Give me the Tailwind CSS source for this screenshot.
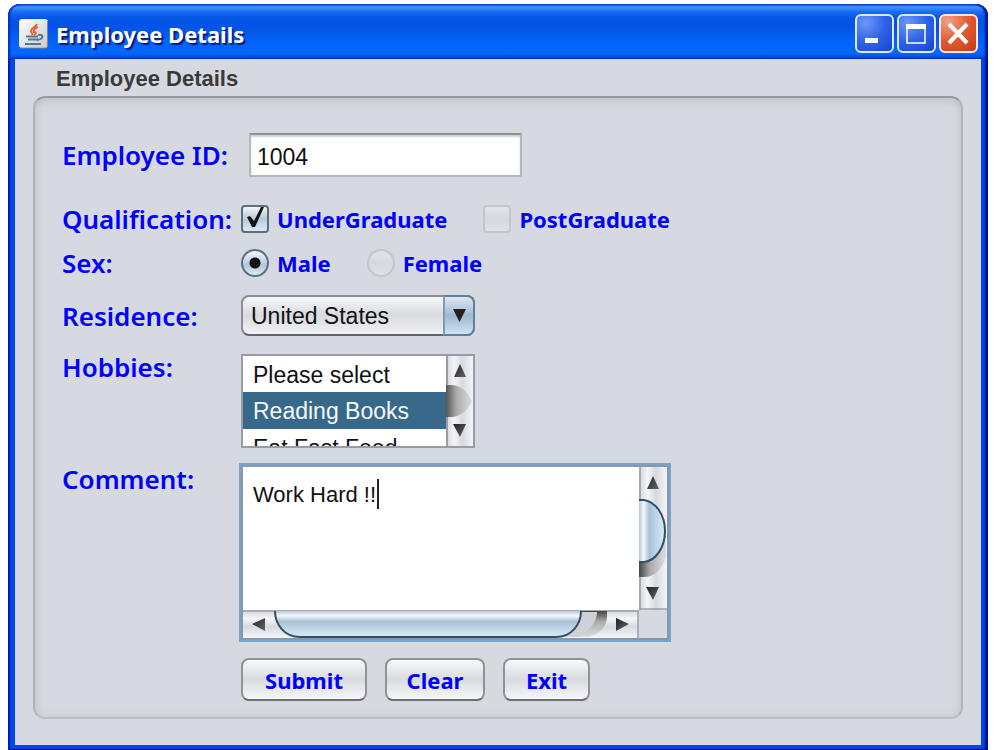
<!DOCTYPE html>
<html lang="en">
<head>
    <meta charset="UTF-8">
    <meta name="viewport" content="width=device-width, initial-scale=1.0">
    <script src="https://cdn.jsdelivr.net/npm/@tailwindcss/browser@4"></script>
    <title>Employee Details</title>
</head>
<body class="bg-white">
    <div class="min-h-screen flex flex-col pt-1 pl-2 pr-3 font-['Liberation_Sans',sans-serif]">
        <div class="grow flex flex-col rounded-t-xl bg-[#0348e6] shadow-[inset_2px_0_1px_#0018c0,inset_-3px_0_2px_#000c96,inset_0_-2px_1px_#000c96]">
            <!-- title bar -->
            <header
                class="h-[55px] flex items-center pl-[11px] pr-2.5 pt-1 rounded-t-xl
                bg-[linear-gradient(180deg,#0a4fd8_0%,#3a94ff_6%,#1c6cf4_14%,#0454e4_26%,#0355e6_45%,#0364fb_70%,#0468ff_90%,#0040d0_100%)]
                shadow-[inset_2px_0_2px_#0030c8,inset_-3px_0_2px_#0018a8]"
            >
                <svg class="w-[29px] h-[30px] shrink-0" viewBox="0 0 29 30">
                    <defs>
                        <linearGradient id="java" x1="0" y1="0" x2="1" y2="1">
                            <stop offset="0" stop-color="#fdfdfd"/>
                            <stop offset="1" stop-color="#c9cbce"/>
                        </linearGradient>
                    </defs>
                    <rect x=".5" y=".5" width="28" height="28" rx="2" fill="url(#java)" stroke="#e8ecf4"/>
                    <path d="M1 29h27M28.500 2v26" stroke="#7e8590" fill="none"/>
                    <path d="M18 5c-1 3-6 4-6 7 0 2 2 2 1 4M19 8c-3 1-5 3-4 5 2 0 3 1 0 3" stroke="#ee6038" stroke-width="2" fill="none"/>
                    <path d="M7 17.500h12M9 20.500h10M6 25h16" stroke="#547795" stroke-width="2" fill="none"/>
                    <path d="M19 16c6-1 6 4-1 5" stroke="#547795" stroke-width="2" fill="none"/>
                </svg>
                <h1 class="grow pl-2 font-['Noto_Sans',sans-serif] text-[22px] leading-8 font-bold text-white [text-shadow:2px_2px_1px_#0a1c80]">Employee Details</h1>
                <div class="flex gap-[3px]">
                    <button
                        type="button" aria-label="Minimize"
                        class="size-[39px] rounded-md border-2 border-[#dfe8ff]
                        bg-[radial-gradient(circle_at_25%_20%,#6d98f6,#2e62ea_50%,#1845cc)]"
                    >
                        <svg viewBox="0 0 35 35"><path d="M8 22h13v5H8z" fill="#fff"/></svg>
                    </button>
                    <button
                        type="button" aria-label="Maximize"
                        class="size-[39px] rounded-md border-2 border-[#dfe8ff]
                        bg-[radial-gradient(circle_at_25%_20%,#6d98f6,#2e62ea_50%,#1845cc)]"
                    >
                        <svg viewBox="0 0 35 35">
                            <path d="M8 10h18v17H8z" fill="none" stroke="#fff" stroke-width="1.500"/>
                            <path d="M7 8h20v5H7z" fill="#fff"/>
                        </svg>
                    </button>
                    <button
                        type="button" aria-label="Close"
                        class="size-[39px] rounded-md border-2 border-[#ffe8e0]
                        bg-[radial-gradient(circle_at_20%_15%,#f0a084,#e05a32_50%,#c83c10)]"
                    >
                        <svg viewBox="0 0 35 35"><path d="M8 8l18 19M26 8L8 27" stroke="#fff" stroke-width="4"/></svg>
                    </button>
                </div>
            </header>

            <main class="grow flex flex-col ml-[7px] mr-[7px] mb-1.5 px-[18px] pb-[26px] bg-[#d6d9df]">
                <h2 id="group_title" class="pl-[23px] pt-1 h-[37px] text-[22px] leading-8 font-bold text-[#3a3a3a]">Employee Details</h2>
                <form
                    name="employee" aria-labelledby="group_title"
                    class="grow rounded-xl border-2 border-t-[#989aa0] border-x-[#b2b4b8] border-b-[#bcbec2]
                    shadow-[inset_0_2px_8px_#a8aaae99] pl-[27px] pt-[35px] pb-4 pr-4 text-[23px] text-[#111111]"
                >
                    <div class="flex items-center h-11">
                        <label for="employee_id" class="w-[187px] font-['Noto_Sans',sans-serif] text-[26px] leading-8 font-semibold text-[#0000ff]">Employee ID:</label>
                        <input
                            type="text" id="employee_id" name="employee_id" value="1004"
                            class="w-[273px] h-11 px-1.5 pt-1 bg-white border-2 border-[#b4b7be] border-t-[#8d9097] shadow-[inset_0_2px_2px_#d0d2d6]">
                    </div>

                    <div class="flex items-center h-11 mt-5" role="group" aria-labelledby="qualification">
                        <span id="qualification" class="w-[179px] font-['Noto_Sans',sans-serif] text-[26px] leading-8 font-semibold text-[#0000ff]">Qualification:</span>
                        <div class="flex items-center gap-9 font-['Noto_Sans',sans-serif] text-[22px] leading-8 font-bold text-[#0000ff]">
                            <label class="flex items-center gap-2">
                                <span class="relative size-7">
                                    <input
                                        type="checkbox" name="undergraduate" checked
                                        class="block appearance-none size-7 rounded border-2 border-[#5b6f82] bg-linear-to-b from-[#f2f6fa] via-[#b6c9da] to-[#dcebf6]">
                                    <svg class="absolute inset-0 pointer-events-none" viewBox="0 0 28 28"><path d="M6 12l3-1 4 5 7-14 3 0-9 20h-3z" fill="#111"/></svg>
                                </span>
                                UnderGraduate
                            </label>
                            <label class="flex items-center gap-2">
                                <input
                                    type="checkbox" name="postgraduate"
                                    class="appearance-none size-7 rounded border-2 border-[#c3c6ca] bg-linear-to-b from-[#e2e4e8] via-[#d5d8dd] to-[#dee1e5]">
                                PostGraduate
                            </label>
                        </div>
                    </div>

                    <div class="flex items-center h-11" role="radiogroup" aria-labelledby="sex">
                        <span id="sex" class="w-[179px] font-['Noto_Sans',sans-serif] text-[26px] leading-8 font-semibold text-[#0000ff]">Sex:</span>
                        <div class="flex items-center gap-9 font-['Noto_Sans',sans-serif] text-[22px] leading-8 font-bold text-[#0000ff]">
                            <label class="flex items-center gap-2">
                                <input
                                    type="radio" name="sex" value="male" checked
                                    class="appearance-none size-7 rounded-full border-2 border-[#5b6f82]
                                    bg-[radial-gradient(circle,#111111_5px,transparent_6px),linear-gradient(180deg,#f2f6fa,#b3c7d9_60%,#dcebf6)]">
                                Male
                            </label>
                            <label class="flex items-center gap-2">
                                <input
                                    type="radio" name="sex" value="female"
                                    class="appearance-none size-7 rounded-full border-2 border-[#c3c6ca] bg-linear-to-b from-[#e2e4e8] via-[#d5d8dd] to-[#dee1e5]">
                                Female
                            </label>
                        </div>
                    </div>

                    <div class="flex items-center h-[41px] mt-2.5">
                        <label for="residence" class="w-[179px] font-['Noto_Sans',sans-serif] text-[26px] leading-8 font-semibold text-[#0000ff]">Residence:</label>
                        <div class="relative w-[234px] h-[41px]">
                            <select
                                id="residence" name="residence"
                                class="appearance-none w-full h-full pl-2 pt-0.5 rounded-lg border-2 border-[#8b8e95] border-b-[#62656b]
                                bg-linear-to-b from-[#f7f8fa] via-[#d8dadf] to-[#f2f3f6]"
                            >
                                <option>United States</option>
                            </select>
                            <div
                                class="absolute right-0 inset-y-0 w-8 rounded-r-lg border-2 border-[#5f7f9d] border-l-[#7c9cb8] pointer-events-none
                                bg-linear-to-b from-[#dfe9f2] via-[#9fb9d1] to-[#cfe2f0]"
                            >
                                <svg viewBox="0 0 28 37"><path d="M8 12h13l-6.500 13z" fill="#222"/></svg>
                            </div>
                        </div>
                    </div>

                    <div class="flex items-start mt-[18px]">
                        <label for="hobbies" class="w-[179px] font-['Noto_Sans',sans-serif] text-[26px] leading-[26px] font-semibold text-[#0000ff]">Hobbies:</label>
                        <div class="flex w-[234px] h-[94px] border-2 border-[#979ca8] bg-white">
                            <select id="hobbies" name="hobbies" size="3" class="appearance-none grow h-[90px] overflow-hidden [scrollbar-width:none]">
                                <option class="h-9 px-2.5 pt-1.5 pb-0">Please select</option>
                                <option selected class="h-[37px] px-2.5 pt-1.5 pb-0 text-[#f4f8fb] bg-linear-to-b from-[#39698a] to-[#39698a]">Reading Books</option>
                                <option class="h-9 px-2.5 pt-1.5 pb-0">Eat Fast Food</option>
                            </select>
                            <svg class="w-[27px] h-[90px] shrink-0" viewBox="0 0 27 90">
                                <defs>
                                    <linearGradient id="track">
                                        <stop offset="0" stop-color="#d2d4da"/>
                                        <stop offset=".3" stop-color="#f4f5f8"/>
                                        <stop offset=".6" stop-color="#d7d9df"/>
                                        <stop offset="1" stop-color="#f4f5f8"/>
                                    </linearGradient>
                                    <linearGradient id="gap">
                                        <stop offset="0" stop-color="#555"/>
                                        <stop offset=".4" stop-color="#aaa"/>
                                        <stop offset="1" stop-color="#dcdde0"/>
                                    </linearGradient>
                                    <linearGradient id="arrow" x1="0" y1="0" x2="1" y2="1">
                                        <stop offset="0" stop-color="#222"/>
                                        <stop offset="1" stop-color="#666"/>
                                    </linearGradient>
                                </defs>
                                <path d="M0 0h27v90H0z" fill="url(#track)"/>
                                <path d="M1 0v90" stroke="#979ca8" stroke-width="2"/>
                                <path d="M0 29h5c9 0 16 6 21 16-5 10-12 16-21 16H0z" fill="url(#gap)"/>
                                <path d="M14 8l6 13H8z" fill="url(#arrow)"/>
                                <path d="M7 68h13l-6 13z" fill="url(#arrow)"/>
                            </svg>
                        </div>
                    </div>

                    <div class="flex items-start mt-[17px]">
                        <label for="comment" class="w-[179px] font-['Noto_Sans',sans-serif] text-[26px] leading-7 font-semibold text-[#0000ff]">Comment:</label>
                        <div class="relative w-[428px] border-2 border-[#8b96a6] ring-2 ring-[#74a5d0] bg-[#d6d9df]">
                            <div class="flex">
                                <textarea
                                    id="comment" name="comment"
                                    class="block grow h-[143px] px-2.5 pt-3.5 text-[22px] leading-7 bg-white resize-none outline-none overflow-hidden"
                                >Work Hard !!</textarea>
                                <svg class="w-7 h-[143px] shrink-0" viewBox="0 0 28 143">
                                    <defs>
                                        <linearGradient id="vthumb">
                                            <stop offset="0" stop-color="#b4c9dc"/>
                                            <stop offset=".18" stop-color="#f4f8fb"/>
                                            <stop offset=".4" stop-color="#a9c1d6"/>
                                            <stop offset="1" stop-color="#d9eefa"/>
                                        </linearGradient>
                                        <linearGradient id="vgap">
                                            <stop offset="0" stop-color="#444"/>
                                            <stop offset=".4" stop-color="#aaa"/>
                                            <stop offset="1" stop-color="#dddee2"/>
                                        </linearGradient>
                                    </defs>
                                    <path d="M0 0h28v143H0z" fill="url(#track)"/>
                                    <path d="M1 0v143M0 142h28" stroke="#979ca8" stroke-width="1.500"/>
                                    <path d="M0 70h27v20c-4 12-11 20-22 20H0z" fill="url(#vgap)"/>
                                    <path d="M0 33h5c12 2 21 15 21 31S17 94 5 95H0z" fill="url(#vthumb)"/>
                                    <path d="M0 33h5c12 2 21 15 21 31S17 94 5 95H0" fill="none" stroke="#334e68" stroke-width="2"/>
                                    <path d="M14 9l6 13H8z" fill="url(#arrow)"/>
                                    <path d="M7 120h13l-6 13z" fill="url(#arrow)"/>
                                </svg>
                            </div>
                            <svg class="block w-[396px] h-7" viewBox="0 0 396 28">
                                <defs>
                                    <linearGradient id="htrack" x2="0" y2="1">
                                        <stop offset="0" stop-color="#d2d4da"/>
                                        <stop offset=".3" stop-color="#f4f5f8"/>
                                        <stop offset=".6" stop-color="#d7d9df"/>
                                        <stop offset="1" stop-color="#f4f5f8"/>
                                    </linearGradient>
                                    <linearGradient id="hthumb" x2="0" y2="1">
                                        <stop offset="0" stop-color="#b4c9dc"/>
                                        <stop offset=".18" stop-color="#f4f8fb"/>
                                        <stop offset=".4" stop-color="#a9c1d6"/>
                                        <stop offset="1" stop-color="#d9eefa"/>
                                    </linearGradient>
                                    <linearGradient id="hgap" x2="0" y2="1">
                                        <stop offset="0" stop-color="#444"/>
                                        <stop offset=".4" stop-color="#aaa"/>
                                        <stop offset="1" stop-color="#dddee2"/>
                                    </linearGradient>
                                </defs>
                                <path d="M0 0h396v28H0z" fill="url(#htrack)"/>
                                <path d="M0 1h396M395 0v28" stroke="#979ca8" stroke-width="1.500"/>
                                <path d="M310 1h54v6c0 10-8 17-18 20h-36z" fill="url(#hgap)"/>
                                <path d="M310 2h44c0 10-8 19-18 25h-26z" fill="#cfd1d6"/>
                                <path d="M32 1c0 13 9 26 25 26h256c16 0 25-13 25-26z" fill="url(#hthumb)"/>
                                <path d="M32 1c0 13 9 26 25 26h256c16 0 25-13 25-26" fill="none" stroke="#334e68" stroke-width="2"/>
                                <path d="M9 14l13-6v13z" fill="url(#arrow)"/>
                                <path d="M373 8l13 6-13 7z" fill="url(#arrow)"/>
                            </svg>
                            <!-- text cursor -->
                            <div class="absolute left-[134px] top-3 w-0.5 h-[30px] bg-[#222222]"></div>
                        </div>
                    </div>

                    <div class="flex gap-[18px] mt-[18px] pl-[179px] font-['Noto_Sans',sans-serif] text-[22px] leading-8 font-bold text-[#0000ff]">
                        <button
                            type="submit"
                            class="h-[43px] w-[126px] rounded-lg border-2 border-[#8f9298] border-b-[#6c6e73]
                            bg-linear-to-b from-[#f8f9fb] via-[#d8dadf] to-[#f6f7f9]"
                        >
                            Submit
                        </button>
                        <button
                            type="reset"
                            class="h-[43px] w-[100px] rounded-lg border-2 border-[#8f9298] border-b-[#6c6e73]
                            bg-linear-to-b from-[#f8f9fb] via-[#d8dadf] to-[#f6f7f9]"
                        >
                            Clear
                        </button>
                        <button
                            type="button"
                            class="h-[43px] w-[87px] rounded-lg border-2 border-[#8f9298] border-b-[#6c6e73]
                            bg-linear-to-b from-[#f8f9fb] via-[#d8dadf] to-[#f6f7f9]"
                        >
                            Exit
                        </button>
                    </div>
                </form>
            </main>
        </div>
    </div>
</body>
</html>
